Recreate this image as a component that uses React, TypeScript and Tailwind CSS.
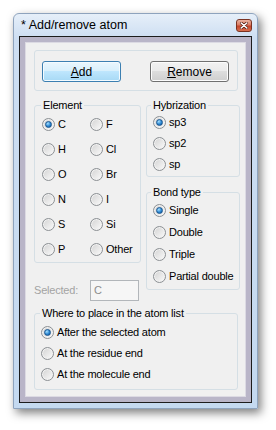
import React from 'react'

function Radio({ checked = false }: { checked?: boolean }) {
  return (
    <span className="flex h-[13px] w-[13px] shrink-0 items-center justify-center rounded-full border border-[#8c9094] bg-[linear-gradient(135deg,#d2d2d2,#fbfbfb)] shadow-[inset_0_0_0_1px_#f2f2f2]">
      {checked && (
        <span className="h-[7px] w-[7px] rounded-full border border-[#1a5690] bg-[radial-gradient(circle_at_35%_30%,#a6e0ff,#2c88d3_55%,#0c4d8c)]" />
      )}
    </span>
  )
}

function Option({ label, checked, rowClass }: { label: string; checked?: boolean; rowClass: string }) {
  return (
    <div className={rowClass}>
      <Radio checked={checked} />
      <span>{label}</span>
    </div>
  )
}

function CloseButton() {
  return (
    <span className="flex h-[13px] w-[16px] items-center justify-center rounded-[3px] border border-[#7a3322] bg-[linear-gradient(to_bottom,#eab3a2_0%,#d97a61_45%,#c4442a_55%,#d9704f_100%)]">
      <svg width="8" height="7" viewBox="0 0 8 7">
        <path d="M1.2 1 L6.8 6 M6.8 1 L1.2 6" stroke="#5a1e12" strokeWidth="3" strokeLinecap="round" />
        <path d="M1.2 1 L6.8 6 M6.8 1 L1.2 6" stroke="#ffffff" strokeWidth="1.6" strokeLinecap="round" />
      </svg>
    </span>
  )
}

const elements: [string, string][] = [
  ['C', 'F'],
  ['H', 'Cl'],
  ['O', 'Br'],
  ['N', 'I'],
  ['S', 'Si'],
  ['P', 'Other'],
]

export default function App() {
  return (
    <div className="min-h-[430px] bg-white pl-[13px] pt-[13px] font-['Liberation_Sans',Arial,sans-serif] text-[11px] tracking-[-0.2px] text-black">
      {/* window frame */}
      <div className="w-[245px] rounded-t-[6px] border border-[#8ea3bd] bg-[linear-gradient(to_bottom,#e6eff9,#cddef2_24px,#c4d9f0)] px-[5px] pb-[5px] shadow-[3px_4px_10px_rgba(0,0,0,0.5)]">
        <div className="flex h-[22px] items-center justify-between pl-[2px]">
          <span className="text-[12.5px] tracking-normal">* Add/remove atom</span>
          <CloseButton />
        </div>

        <div className="border border-[#1c1c1c]">
          <div className="border-[5px] border-[#b9b5c8]">
            <div className="border border-[#dcdae3] bg-[#f0f0f0] pb-[6px] pl-[8px] pr-[7px] pt-[7px]">
              {/* add / remove */}
              <div className="flex h-[41px] items-start justify-between rounded-[3px] border border-[#d5dfe5] pl-[7px] pr-[8px] pt-[10px]">
                <button className="h-[21px] w-[79px] rounded-[3px] border border-[#3c7fb1] bg-[linear-gradient(to_bottom,#eaf6fd_0%,#d9f0fc_45%,#bee6fd_50%,#a7d9f5_100%)] text-[12px] tracking-normal shadow-[inset_0_0_0_1px_#f4fbff]">
                  <span className="underline underline-offset-[1px]">A</span>dd
                </button>
                <button className="h-[21px] w-[79px] rounded-[3px] border border-[#707070] bg-[linear-gradient(to_bottom,#f2f2f2_0%,#ebebeb_45%,#dddddd_50%,#cfcfcf_100%)] text-[12px] tracking-normal shadow-[inset_0_0_0_1px_#fcfcfc]">
                  <span className="underline underline-offset-[1px]">R</span>emove
                </button>
              </div>

              <div className="mt-[7px] flex gap-[7px]">
                {/* left column */}
                <div className="w-[105px]">
                  <fieldset className="rounded-[3px] border border-[#d5dfe5] px-[7px]">
                    <legend className="-ml-[1px] px-[2px] leading-[14px]">Element</legend>
                    <div className="grid grid-cols-[48px_1fr]">
                      {elements.map(([a, b]) => (
                        <React.Fragment key={a}>
                          <Option label={a} checked={a === 'C'} rowClass="flex h-[25px] items-center gap-[3px]" />
                          <Option label={b} rowClass="flex h-[25px] items-center gap-[3px]" />
                        </React.Fragment>
                      ))}
                    </div>
                  </fieldset>
                  <div className="mt-[17px] flex h-[21px] items-center justify-between">
                    <span className="text-[#a3a3a3]">Selected:</span>
                    <div className="flex h-[21px] w-[49px] items-center border border-[#b2b6ba] bg-[#f6f6f6] pl-[3px] text-[#8d8d8d]">
                      C
                    </div>
                  </div>
                </div>

                {/* right column */}
                <div className="flex-1">
                  <fieldset className="rounded-[3px] border border-[#d5dfe5] px-[6px] pb-[1px]">
                    <legend className="-ml-[2px] px-[2px] leading-[14px]">Hybrization</legend>
                    <Option label="sp3" checked rowClass="flex h-[21px] items-center gap-[3px]" />
                    <Option label="sp2" rowClass="flex h-[21px] items-center gap-[3px]" />
                    <Option label="sp" rowClass="flex h-[21px] items-center gap-[3px]" />
                  </fieldset>
                  <fieldset className="mt-[8px] rounded-[3px] border border-[#d5dfe5] px-[6px] pb-[2px]">
                    <legend className="-ml-[2px] px-[2px] leading-[14px]">Bond type</legend>
                    <Option label="Single" checked rowClass="flex h-[22px] items-center gap-[3px]" />
                    <Option label="Double" rowClass="flex h-[22px] items-center gap-[3px]" />
                    <Option label="Triple" rowClass="flex h-[22px] items-center gap-[3px]" />
                    <Option label="Partial double" rowClass="flex h-[22px] items-center gap-[3px] whitespace-nowrap" />
                  </fieldset>
                </div>
              </div>

              {/* placement */}
              <fieldset className="mt-[5px] rounded-[3px] border border-[#d5dfe5] px-[6px] pb-[4px] pt-[2px]">
                <legend className="-ml-[1px] px-[2px] leading-[14px]">Where to place in the atom list</legend>
                <Option label="After the selected atom" checked rowClass="flex h-[21px] items-center gap-[3px]" />
                <Option label="At the residue end" rowClass="flex h-[21px] items-center gap-[3px]" />
                <Option label="At the molecule end" rowClass="flex h-[21px] items-center gap-[3px]" />
              </fieldset>
            </div>
          </div>
        </div>
      </div>
    </div>
  )
}
